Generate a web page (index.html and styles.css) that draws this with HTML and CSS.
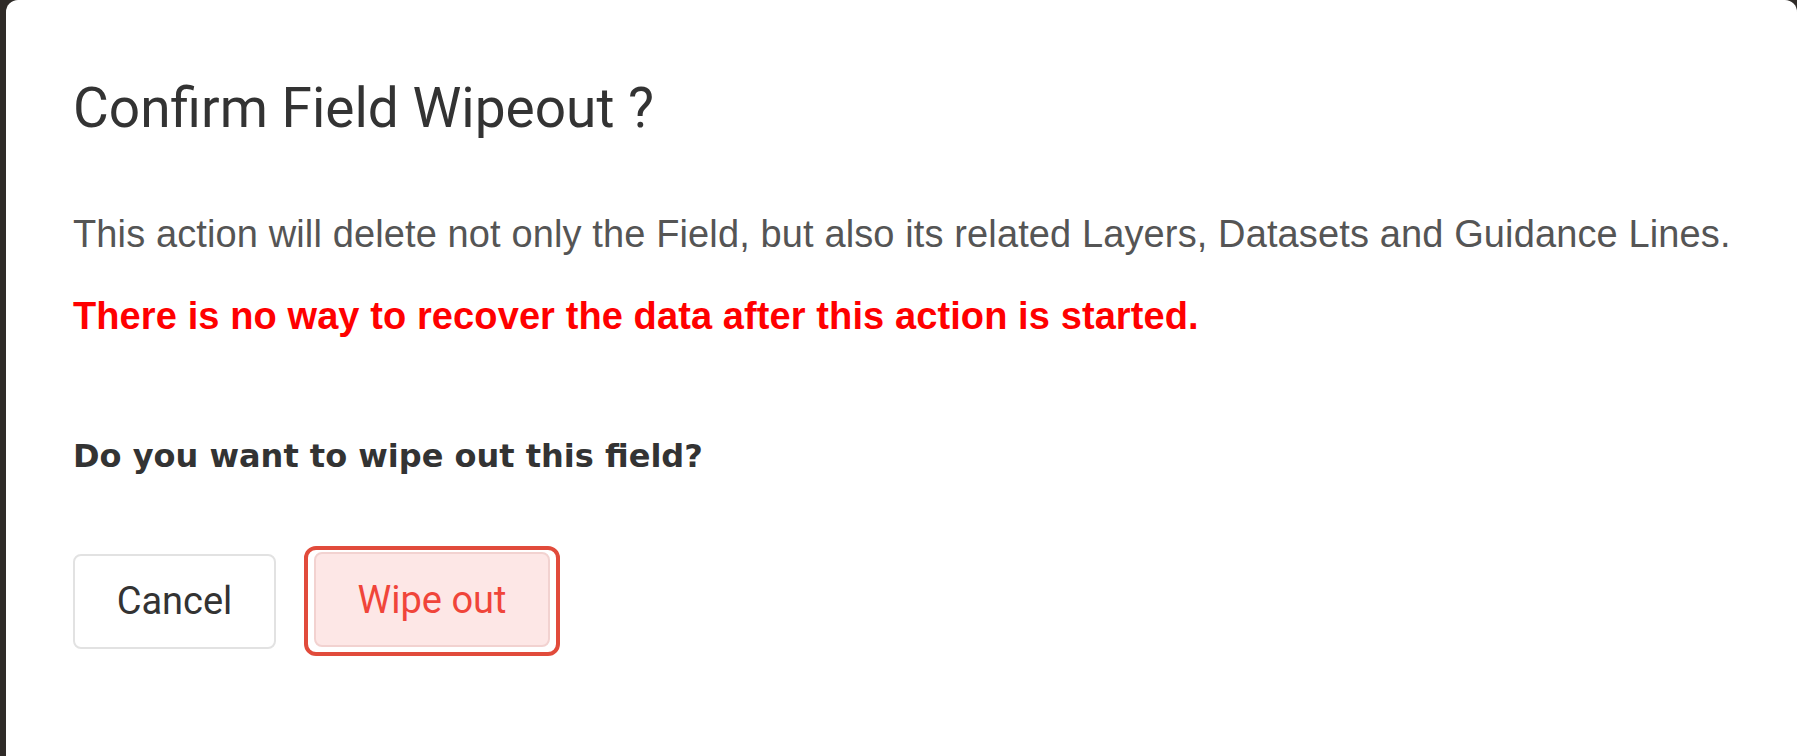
FILE: index.html
```html
<!DOCTYPE html>
<html lang="en">
<head>
<meta charset="utf-8">
<title>Confirm Field Wipeout</title>
<link rel="stylesheet" href="styles.css">
</head>
<body>
  <div class="dialog" role="dialog" aria-labelledby="dlg-title">
    <h1 class="dialog-title" id="dlg-title">Confirm Field Wipeout ?</h1>
    <p class="dialog-text">This action will delete not only the Field, but also its related Layers, Datasets and Guidance Lines.</p>
    <p class="dialog-warning">There is no way to recover the data after this action is started.</p>
    <p class="dialog-question">Do you want to wipe out this field?</p>
    <div class="dialog-actions">
      <button class="btn btn-cancel" type="button">Cancel</button>
      <span class="focus-ring"><button class="btn btn-danger" type="button">Wipe out</button></span>
    </div>
  </div>
</body>
</html>
```

FILE: styles.css
```css
html, body {
  margin: 0;
  padding: 0;
  height: 100%;
}

body {
  background: #2f2b28;
  overflow: hidden;
  display: flex;
  align-items: flex-start;
}

.dialog {
  box-sizing: border-box;
  margin-left: 6px;
  width: calc(100% - 4px);
  height: calc(100% + 20px);
  background: #ffffff;
  border-radius: 12px;
  padding: 76px 40px 0 67px;
  display: flex;
  flex-direction: column;
  align-items: flex-start;
}

.dialog-title {
  margin: 0;
  font-family: Roboto, "Liberation Sans", sans-serif;
  font-weight: 400;
  font-size: 55px;
  line-height: 64px;
  color: #333333;
}

.dialog-text {
  margin: 73px 0 0 0;
  font-family: "Liberation Sans", Arial, sans-serif;
  font-size: 38px;
  letter-spacing: 0.12px;
  line-height: 42px;
  color: #555555;
  white-space: nowrap;
}

.dialog-warning {
  margin: 40px 0 0 0;
  font-family: "Liberation Sans", Arial, sans-serif;
  font-weight: 700;
  font-size: 38px;
  letter-spacing: 0.1px;
  line-height: 42px;
  color: #ff0000;
}

.dialog-question {
  margin: 101px 0 0 0;
  font-family: "DejaVu Sans", Verdana, sans-serif;
  font-weight: 700;
  font-size: 32px;
  line-height: 36px;
  color: #333333;
}

.dialog-actions {
  margin-top: 72px;
  display: flex;
  align-items: center;
  gap: 28px;
}

.btn {
  box-sizing: border-box;
  height: 95px;
  border-radius: 8px;
  font-family: Roboto, "Liberation Sans", sans-serif;
  font-size: 38px;
  font-weight: 400;
  cursor: pointer;
  margin: 0;
}

.btn-cancel {
  width: 203px;
  background: #ffffff;
  border: 2px solid #e2e2e2;
  color: #333333;
}

.focus-ring {
  display: inline-flex;
  padding: 2px 6px 5px 6px;
  border: 4px solid #e14b3b;
  border-radius: 12px;
}

.btn-danger {
  width: 236px;
  background: #fde7e6;
  border: 2px solid #f2d2d0;
  color: #f0453a;
}
```
